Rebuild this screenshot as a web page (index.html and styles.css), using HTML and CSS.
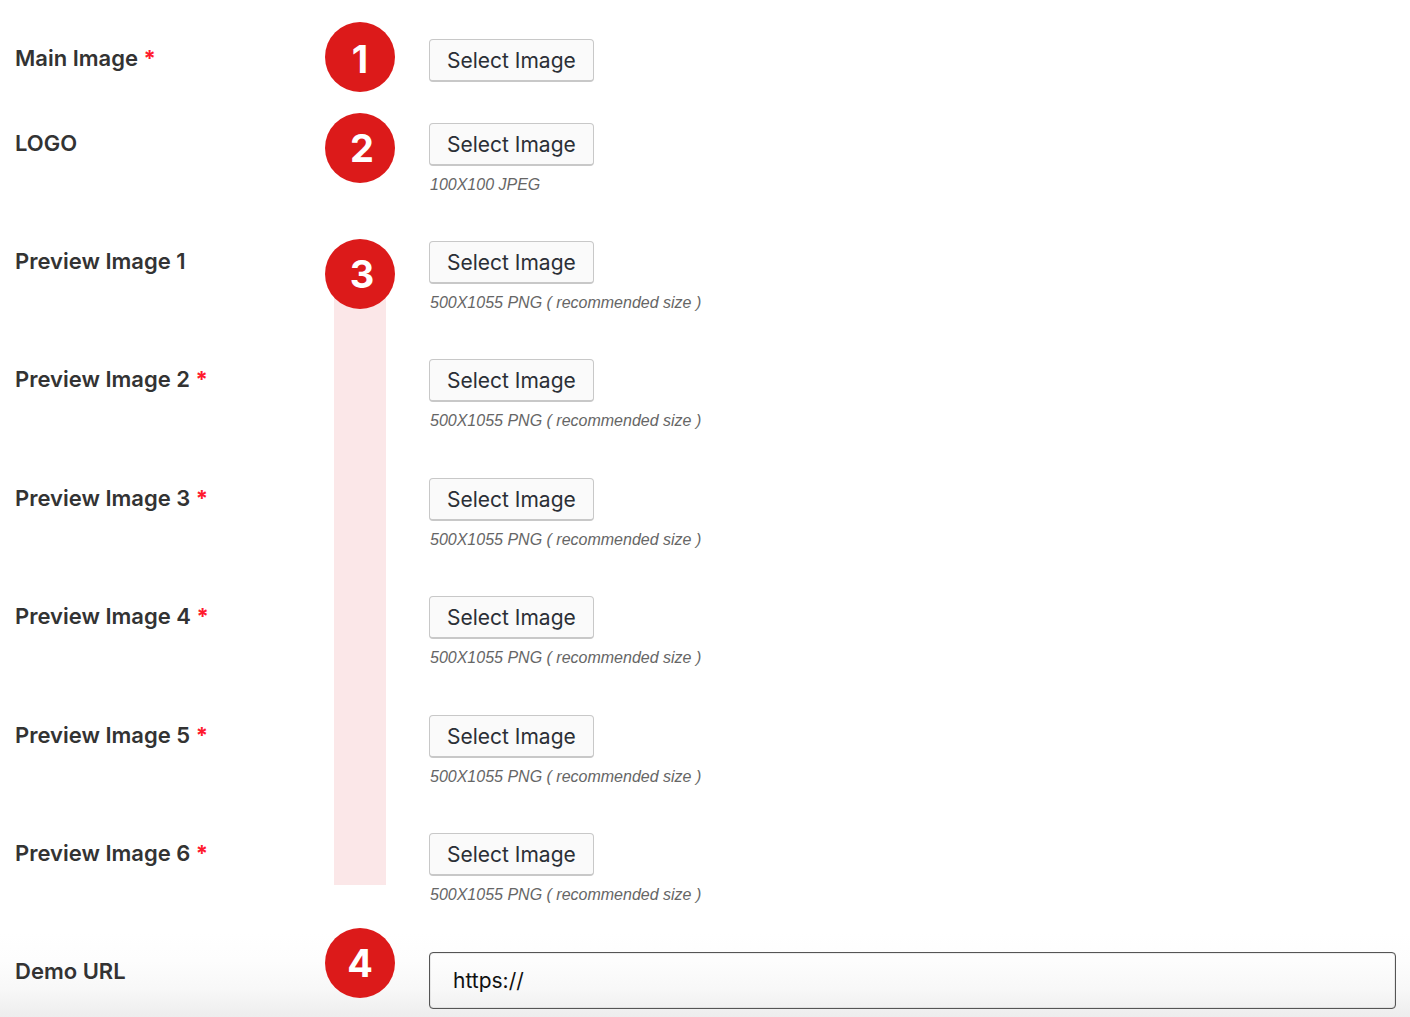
FILE: index.html
```html
<!DOCTYPE html>
<html lang="en">
<head>
    <meta charset="UTF-8">
    <meta name="viewport" content="width=device-width, initial-scale=1.0">
    <title>Images</title>
    <link rel="stylesheet" href="styles.css">
</head>
<body>
    <form class="image-form">
        <div class="row row-main">
            <label class="row-label" for="main-image">Main Image <span class="required">*</span></label>
            <div class="step"><span class="badge badge-main">1</span></div>
            <div class="field">
                <button type="button" class="select-btn" id="main-image">Select Image</button>
            </div>
        </div>

        <div class="row">
            <label class="row-label" for="logo">LOGO</label>
            <div class="step"><span class="badge badge-logo">2</span></div>
            <div class="field">
                <button type="button" class="select-btn" id="logo">Select Image</button>
                <p class="hint">100X100 JPEG</p>
            </div>
        </div>

        <!-- Preview images -->
        <div class="previews">
            <div class="row">
                <label class="row-label" for="preview-1">Preview Image 1</label>
                <div class="step"><span class="badge badge-preview">3</span></div>
                <div class="field">
                    <button type="button" class="select-btn" id="preview-1">Select Image</button>
                    <p class="hint">500X1055 PNG ( recommended size )</p>
                </div>
            </div>
            <div class="row">
                <label class="row-label" for="preview-2">Preview Image 2 <span class="required">*</span></label>
                <div class="field">
                    <button type="button" class="select-btn" id="preview-2">Select Image</button>
                    <p class="hint">500X1055 PNG ( recommended size )</p>
                </div>
            </div>
            <div class="row">
                <label class="row-label" for="preview-3">Preview Image 3 <span class="required">*</span></label>
                <div class="field">
                    <button type="button" class="select-btn" id="preview-3">Select Image</button>
                    <p class="hint">500X1055 PNG ( recommended size )</p>
                </div>
            </div>
            <div class="row">
                <label class="row-label" for="preview-4">Preview Image 4 <span class="required">*</span></label>
                <div class="field">
                    <button type="button" class="select-btn" id="preview-4">Select Image</button>
                    <p class="hint">500X1055 PNG ( recommended size )</p>
                </div>
            </div>
            <div class="row">
                <label class="row-label" for="preview-5">Preview Image 5 <span class="required">*</span></label>
                <div class="field">
                    <button type="button" class="select-btn" id="preview-5">Select Image</button>
                    <p class="hint">500X1055 PNG ( recommended size )</p>
                </div>
            </div>
            <div class="row">
                <label class="row-label" for="preview-6">Preview Image 6 <span class="required">*</span></label>
                <div class="field">
                    <button type="button" class="select-btn" id="preview-6">Select Image</button>
                    <p class="hint">500X1055 PNG ( recommended size )</p>
                </div>
            </div>
        </div>

        <div class="row row-url">
            <label class="row-label" for="demo-url">Demo URL</label>
            <div class="step"><span class="badge badge-url">4</span></div>
            <div class="field">
                <input type="text" class="url-input" id="demo-url" value="https://">
            </div>
        </div>
    </form>
</body>
</html>
```
FILE: styles.css
```css
* {
    box-sizing: border-box;
}

body {
    margin: 0;
    font-family: Inter, "Liberation Sans", sans-serif;
    font-size: 22px;
    color: #333;
    background: linear-gradient(to top, #ededed, #f8f8f8 28px, #fdfdfd 56px, #fff 84px) #fff;
    background-attachment: fixed;
}

.image-form {
    padding: 39px 14px 8px 15px;
}

.row {
    display: grid;
    grid-template-columns: 310px 104px 1fr;
    padding-bottom: 45px;
}

.row-main {
    padding-bottom: 41px;
}

.row-url {
    padding-bottom: 0;
}

.row-label {
    line-height: 40px;
    font-weight: 600;
}

.row-main .row-label,
.row-url .row-label {
    line-height: 38px;
}

.required {
    color: #ff1a2d;
    font-weight: 700;
}

.field {
    grid-column: 3;
}

.select-btn {
    display: block;
    height: 43px;
    padding: 0 17px;
    border: 1px solid #c8c8c8;
    border-bottom-width: 2px;
    border-radius: 4px;
    background: #fafafa;
    color: #2b2f36;
    font-family: inherit;
    font-size: 21px;
    cursor: pointer;
}

.hint {
    margin: 8px 0 0;
    padding-left: 1px;
    font-family: "Liberation Sans", Arial, sans-serif;
    font-size: 16px;
    font-style: italic;
    line-height: 22px;
    color: #666;
}

/* Numbered steps */
.step {
    position: relative;
}

.badge {
    position: absolute;
    left: 0;
    display: flex;
    align-items: center;
    justify-content: center;
    width: 70px;
    height: 70px;
    border-radius: 50%;
    background: #dc1a1a;
    color: #fff;
    font-size: 38px;
    font-weight: 700;
}

.badge-main {
    top: -17px;
    padding-top: 4px;
}

.badge-logo {
    top: -10px;
    padding-left: 4px;
}

.badge-preview {
    top: -2px;
    padding-left: 4px;
}

.badge-url {
    top: -24px;
}

/* Pink bar that runs down next to all the previews */
.previews {
    position: relative;
}

.previews::before {
    content: "";
    position: absolute;
    top: 34px;
    bottom: 67px;
    left: 319px;
    width: 52px;
    background: #fbe7e8;
}

.previews .row:nth-child(even) {
    padding-bottom: 46px;
}

.url-input {
    display: block;
    width: 100%;
    height: 57px;
    padding: 0 23px;
    border: 1px solid #555;
    border-radius: 4px;
    box-shadow: inset 0 0 1px #555;
    background: transparent;
    color: #111;
    font-family: inherit;
    font-size: 21px;
}
```
